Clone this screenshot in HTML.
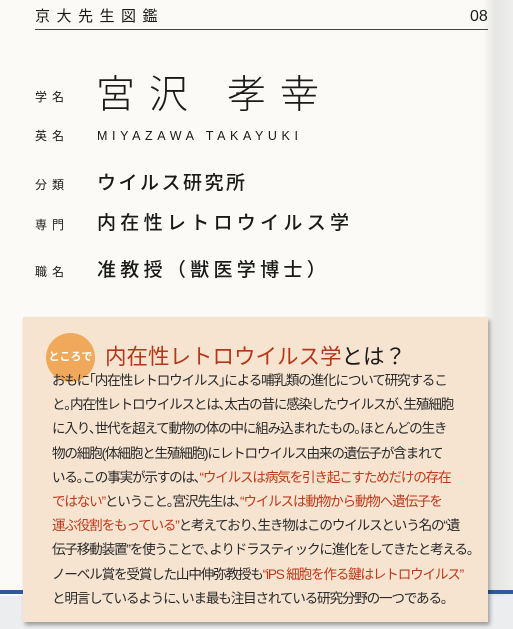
<!DOCTYPE html>
<html><head><meta charset="utf-8"><style>
html,body{margin:0;padding:0}
body{width:513px;height:629px;overflow:hidden;position:relative;background:#fbfaf6;font-family:"Liberation Sans","Noto Sans CJK JP",sans-serif;color:#1a1a1a}
.edge{position:absolute;right:0;top:0;width:30px;height:629px;background:linear-gradient(90deg,#fbfaf6,#e6e6e4 40%,#eeeeec)}
.hd{position:absolute;left:35px;top:6px;font-size:15px;letter-spacing:6.5px;line-height:22px}
.pg{position:absolute;left:470px;top:6px;font-size:16px;line-height:22px}
.rule{position:absolute;left:35px;top:29px;width:453px;height:1px;background:#444}
.lb{position:absolute;left:35px;font-size:12px;letter-spacing:5px;line-height:16px}
.v{position:absolute;left:97px;font-size:19px;letter-spacing:4.3px;line-height:26px;font-weight:500}
.name{position:absolute;left:96px;top:72px;font-size:39px;letter-spacing:14px;line-height:48px;font-weight:300}
.en{position:absolute;left:97px;top:128px;font-size:12.5px;letter-spacing:4.6px;line-height:16px}
.bl{position:absolute;top:590px;height:4px;background:#2f5a9c}
.shadow{position:absolute;left:0;top:596px;width:513px;height:33px;background:#ecedef}
.box{position:absolute;left:23px;top:317px;width:465px;height:305px;background:#f6e4d1;box-shadow:2px 3px 4px rgba(0,0,0,.35)}
.circ{position:absolute;left:46px;top:333px;width:49px;height:49px;border-radius:50%;background:#f0a95a;color:#fff;font-size:11px;font-weight:bold;line-height:49px;text-align:center}
.ttl{position:absolute;left:105px;top:342px;font-size:21.5px;line-height:30px;color:#b5371a;white-space:nowrap}
.ttl span{color:#1a1a1a}
.body{position:absolute;left:52px;top:369px;font-size:13.6px;line-height:24.2px;color:#2a2a2a;white-space:nowrap;letter-spacing:-1.2px}
.r{color:#c0391b}
</style></head><body>
<div class="edge"></div>
<div class="hd">京大先生図鑑</div>
<div class="pg">08</div>
<div class="rule"></div>
<div class="lb" style="top:89px">学名</div>
<div class="name">宮沢&nbsp;孝幸</div>
<div class="lb" style="top:128px">英名</div>
<div class="en">MIYAZAWA TAKAYUKI</div>
<div class="lb" style="top:177px">分類</div>
<div class="v" style="top:171px;letter-spacing:2.5px">ウイルス研究所</div>
<div class="lb" style="top:217px">専門</div>
<div class="v" style="top:211px">内在性レトロウイルス学</div>
<div class="lb" style="top:264px">職名</div>
<div class="v" style="top:258px">准教授（獣医学博士）</div>
<div class="shadow"></div>
<div class="bl" style="left:0;width:24px"></div>
<div class="bl" style="left:487px;width:26px"></div>
<div class="box"></div>
<div class="circ">ところで</div>
<div class="ttl">内在性レトロウイルス学<span>とは？</span></div>
<div class="body">おもに｢内在性レトロウイルス｣による哺乳類の進化について研究するこ<br>と｡内在性レトロウイルスとは､太古の昔に感染したウイルスが､生殖細胞<br>に入り､世代を超えて動物の体の中に組み込まれたもの｡ほとんどの生き<br>物の細胞(体細胞と生殖細胞)にレトロウイルス由来の遺伝子が含まれて<br>いる｡この事実が示すのは､<span class="r">“ウイルスは病気を引き起こすためだけの存在</span><br><span class="r">ではない”</span>ということ｡宮沢先生は､<span class="r">“ウイルスは動物から動物へ遺伝子を</span><br><span class="r">運ぶ役割をもっている”</span>と考えており､生き物はこのウイルスという名の“遺<br>伝子移動装置”を使うことで､よりドラスティックに進化をしてきたと考える｡<br>ノーベル賞を受賞した山中伸弥教授も<span class="r">“iPS 細胞を作る鍵はレトロウイルス”</span><br>と明言しているように､いま最も注目されている研究分野の一つである｡</div>
</body></html>
